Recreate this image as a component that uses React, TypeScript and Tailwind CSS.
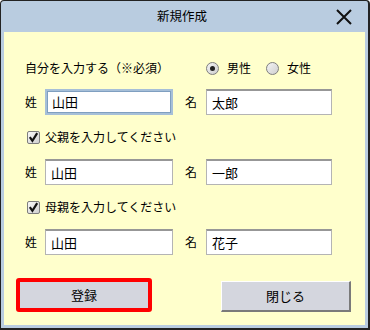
import React from "react";

const font = { fontFamily: '"Noto Sans CJK JP", "Noto Sans", sans-serif' };

function Radio({ checked, label }: { checked?: boolean; label: string }) {
  return (
    <div className="flex items-center">
      <div className="w-[13px] h-[13px] rounded-full border border-[#7e7e7e] bg-gradient-to-br from-[#f4f4f4] to-[#cfcfcf] flex items-center justify-center">
        {checked && <div className="w-[5px] h-[5px] rounded-full bg-[#222]" />}
      </div>
      <span className="ml-[8px]">{label}</span>
    </div>
  );
}

function Check({ label }: { label: string }) {
  return (
    <div className="mt-[12px] h-[20px] flex items-center pl-[23px]">
      <div className="w-[13px] h-[13px] border border-[#7e7e7e] rounded-[2px] bg-gradient-to-br from-[#f8f8f8] to-[#d0d0d0] flex items-center justify-center">
        <svg width="11" height="11" viewBox="0 0 11 11">
          <path d="M1.8 5.2 L4.4 8.8 L9.2 1.2" fill="none" stroke="#111" strokeWidth="2.2" />
        </svg>
      </div>
      <span className="ml-[5px]">{label}</span>
    </div>
  );
}

function NameRow({ sei, mei, focused, first }: { sei: string; mei: string; focused?: boolean; first?: boolean }) {
  const plain = "border border-[#b4b4b4] border-t-2 border-t-[#979797]";
  return (
    <div className={`${first ? "mt-[11px]" : "mt-[12px]"} h-[26px] flex items-center pl-[21px]`}>
      <span className="w-[20px]">姓</span>
      <div
        className={`w-[128px] h-[26px] bg-white flex items-center pl-[5px] text-[13px] ${
          focused ? "border-2 border-[#a6bfd8] shadow-[inset_0_0_0_1px_#7f9fc0]" : plain
        }`}
      >
        {sei}
      </div>
      <span className="ml-[12px] w-[21px]">名</span>
      <div className={`w-[126px] h-[26px] bg-white flex items-center pl-[5px] text-[13px] ${plain}`}>{mei}</div>
    </div>
  );
}

export default function App() {
  return (
    <div className="w-[370px] h-[330px] bg-white text-[12px] text-black" style={font}>
      <div className="w-full h-full flex flex-col bg-[#b9cce0] border-l border-t border-r-2 border-b-2 border-[#222] rounded-t-[4px] px-[3px] pb-[3px]">
        {/* Title bar */}
        <div className="h-[31px] flex items-center shrink-0">
          <span className="ml-[153px] text-[12.5px]">新規作成</span>
          <svg className="ml-auto mr-[13px]" width="16" height="16" viewBox="0 0 16 16">
            <path d="M1 1 L15 15 M15 1 L1 15" stroke="#111" strokeWidth="2" />
          </svg>
        </div>

        {/* Body */}
        <div className="flex-1 bg-[#ffffcc] flex flex-col">
          <div className="mt-[26px] h-[20px] flex items-center pl-[21px]">
            <span className="w-[181px]">自分を入力する（※必須）</span>
            <Radio checked label="男性" />
            <div className="ml-[15px]">
              <Radio label="女性" />
            </div>
          </div>

          <NameRow first focused sei="山田" mei="太郎" />
          <Check label="父親を入力してください" />
          <NameRow sei="山田" mei="一郎" />
          <Check label="母親を入力してください" />
          <NameRow sei="山田" mei="花子" />

          <div className="mt-[23px] flex items-start pl-[12px]">
            <div className="w-[136px] h-[34px] border-4 border-[#ff0000] rounded-[3px] bg-[#d4d6de] flex items-center justify-center text-[13px]">
              登録
            </div>
            <div className="ml-[69px] mt-[3px] w-[130px] h-[31px] bg-[#d4d6de] border-t border-l border-white border-r-2 border-b-2 border-r-[#7a7a7a] border-b-[#7a7a7a] flex items-center justify-center text-[13px]">
              閉じる
            </div>
          </div>
        </div>
      </div>
    </div>
  );
}
